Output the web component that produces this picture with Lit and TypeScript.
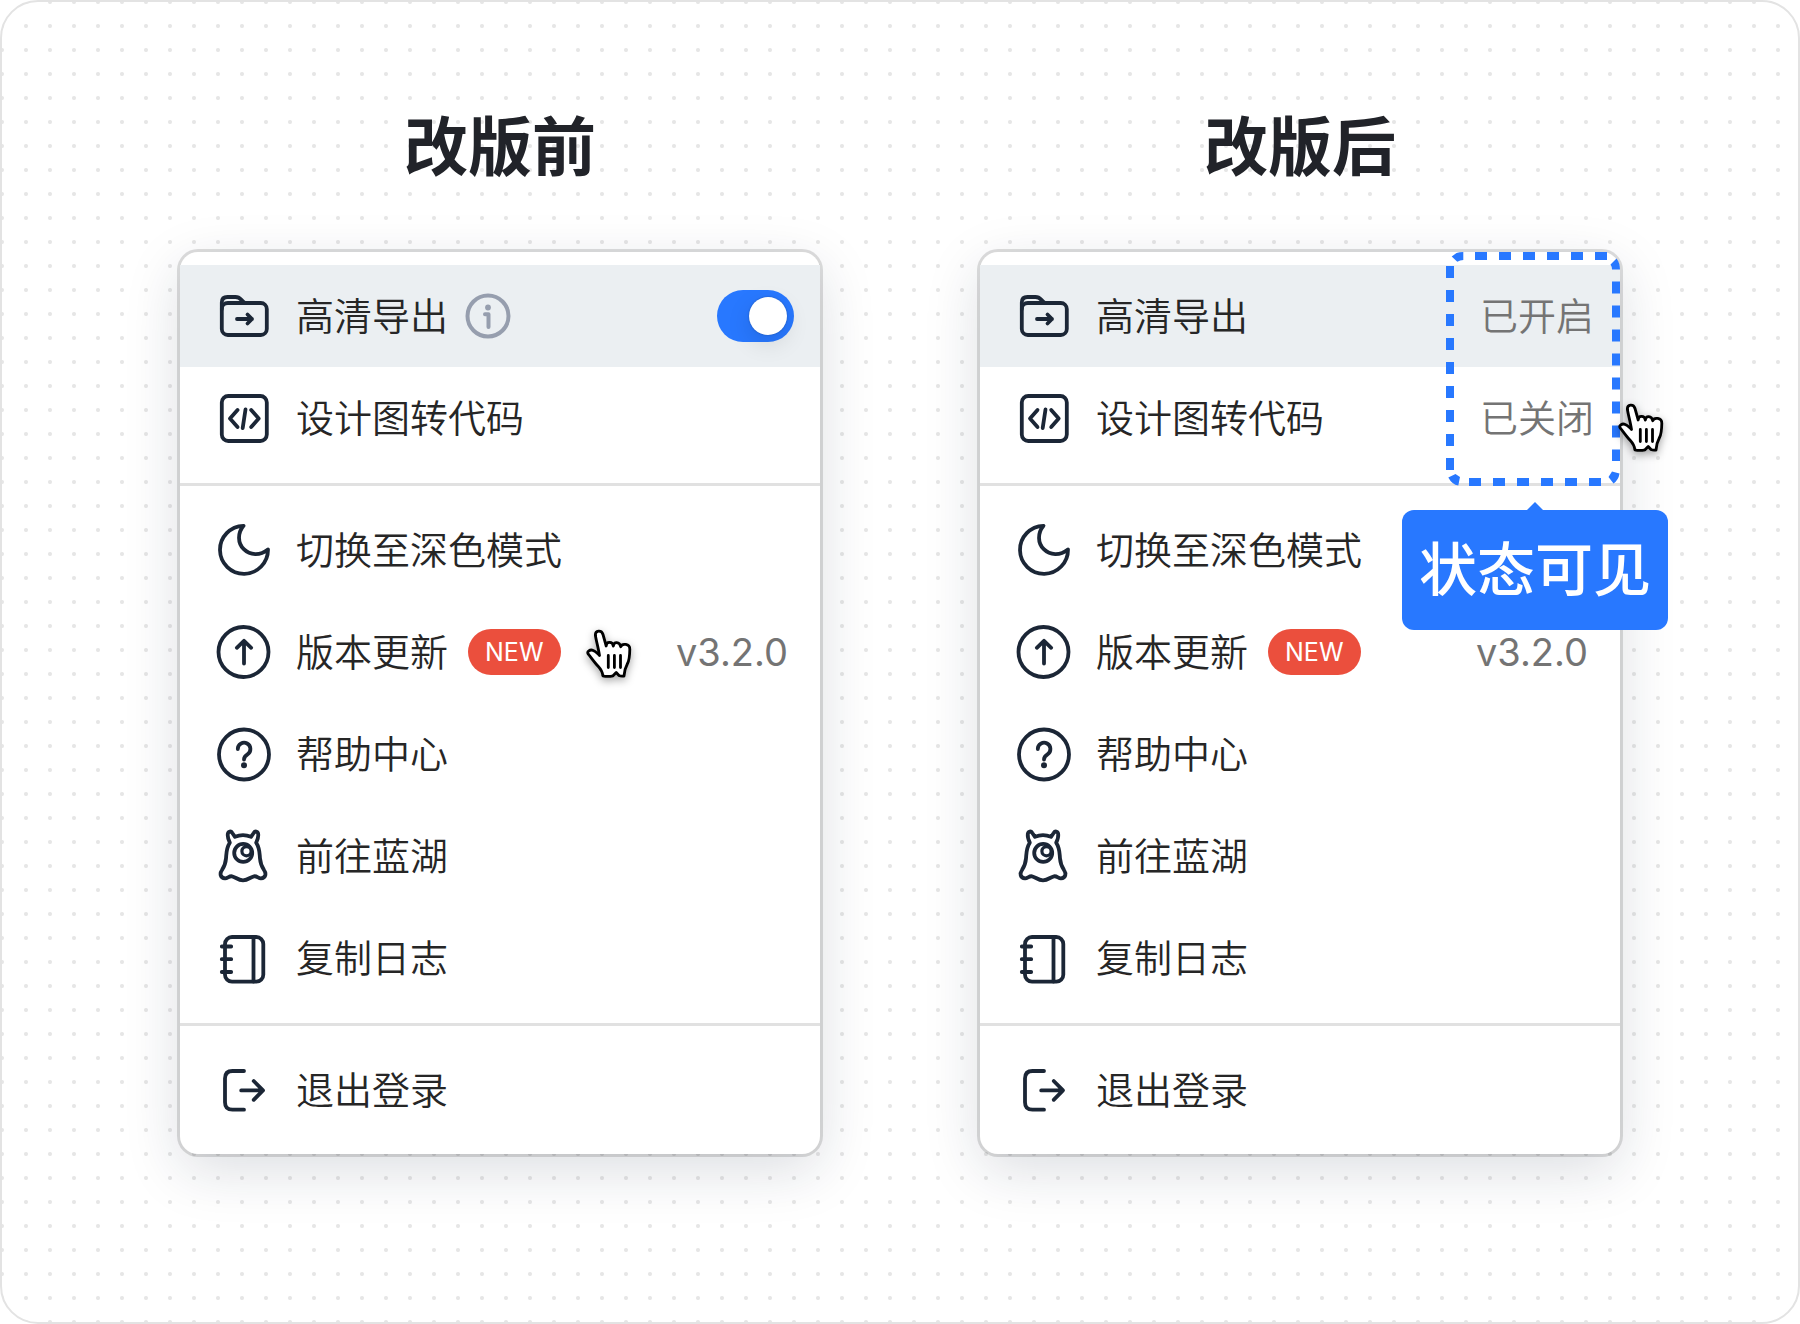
import { LitElement, html, svg, css, nothing, type TemplateResult } from "lit";
import { customElement, property } from "lit/decorators.js";

type IconName =
  | "folder" | "code" | "moon" | "update" | "help" | "monster" | "log" | "logout";

interface MenuItem {
  icon: IconName;
  label: string;
  badge?: string;
  version?: string;
  status?: string;
  toggle?: boolean;
  active?: boolean;
}

const ICONS: Record<IconName, TemplateResult> = {
  folder: svg`
    <rect x="5.8" y="15" width="45" height="32" rx="6"/>
    <path d="M5.8 21V14.5Q5.8 9 11.500 9H19.500C24.500 9 24.500 12 29 15"/>
    <path d="M21 31H36M31.500 26.500L36 31L31.500 35.500"/>`,
  code: svg`
    <rect x="5.800" y="6" width="45" height="45" rx="6.500"/>
    <path d="M21.500 20L14 28.500L21.500 37M29.500 19.500L26.700 38M35.200 20L42.700 28.500L35.200 37"/>`,
  moon: svg`
    <path d="M27.500 3.800A24 24 0 1 0 52 27.500C44 34 34 33.500 27.800 27.200C21.500 21 21.500 11 27.500 3.800Z"/>`,
  update: svg`
    <circle cx="27.500" cy="28" r="25"/>
    <path d="M28 39.500V17M20.800 23.800L28 16.800L35.200 23.800"/>`,
  help: svg`
    <circle cx="28" cy="28.500" r="25"/>
    <path d="M21.800 23A6.300 6.300 0 1 1 31.500 28.300Q28 30.500 28 33.500"/>
    <circle class="solid" cx="28" cy="39.300" r="3"/>`,
  monster: svg`
    <path d="M13.800 14.700C12 11 11.500 8.500 11.800 6C12.200 3 15 2.800 16.300 5L19 8.800Q27 5.500 35 8.800L37.700 5C39 2.800 41.800 3 42.200 6C42.500 8.500 42 11 40.200 14.700C44 20.500 43.500 25.500 44 30.500C44.500 36.500 46 39 48 42C50.500 45.500 49.800 50 45 50.300C42.500 50.500 41 47.800 38 48.300C34.500 49 32 52.300 27 52.300C22 52.300 19.500 49 16 48.300C13 47.800 11.500 50.500 9 50.300C4.200 50 3.500 45.500 6 42C8 39 9.500 36.500 10 30.500C10.500 25.500 10 20.500 13.800 14.700Z"/>
    <circle cx="27.200" cy="24.900" r="9"/>
    <circle class="pupil" cx="30.500" cy="23.200" r="4.600"/>`,
  log: svg`
    <rect x="9" y="7" width="38.300" height="44.700" rx="7"/>
    <path d="M37.500 7V51.500M5.800 16.500H15.200M5.800 29.200H15.200M5.800 42H15.200"/>`,
  logout: svg`
    <path d="M28 9H16.500Q9 9 9 16.500V40.200Q9 47.700 16.500 47.700H28"/>
    <path d="M25.200 28.400H46.500M37.700 19L47 28.400L37.700 37.800"/>`,
};

const hand = html`
  <svg class="hand" viewBox="0 0 46 50" aria-hidden="true">
    <path d="M13 23.500C12 18 10 10.500 9.400 6.500C9 1 15.500 .5 17 5.500L20.200 17C20.200 12.500 26.500 12 27.300 17C27.800 12.500 33.700 12.500 34.700 17.800C36 14 44 14.500 43.800 20.500C43.700 26 43.500 31 41.500 34.500C39 39 38.500 42 38 47Q35 47.500 33 46.500L30.200 43.500L27 46.800Q22 48 16.800 46.800C16.500 41 13.500 39 10.500 35.500C7.500 32 5.500 29 2.300 25.200C.5 22.500 4 20.300 7 21.300C9.500 22 11 24 13.500 26.500Z"/>
    <path d="M22.300 26.500V38.500M28.400 26.500V38.500M34.500 26.500V38.500"/>
  </svg>`;

@customElement("menu-icon")
export class MenuIcon extends LitElement {
  @property() name: IconName = "folder";

  static styles = css`
    :host { display: block; flex: none; width: 56px; height: 56px; }
    svg {
      display: block; width: 56px; height: 56px; fill: none;
      stroke: #1b2636; stroke-width: 3.8;
      stroke-linecap: round; stroke-linejoin: round;
    }
    .solid { fill: #1b2636; stroke: none; }
    .pupil { fill: #fff; stroke-width: 3.2; }
  `;

  render() {
    return html`<svg viewBox="0 0 56 56" aria-hidden="true">${ICONS[this.name]}</svg>`;
  }
}

@customElement("settings-menu")
export class SettingsMenu extends LitElement {
  @property({ attribute: false }) groups: MenuItem[][] = [];

  static styles = css`
    :host { display: block; }
    .panel {
      display: flex; flex-direction: column;
      padding: 13px 0; border-radius: 18px; background: #fff;
      box-shadow: 0 0 0 3px rgba(0, 0, 0, 0.13), 0 16px 56px rgba(20, 32, 60, 0.15);
    }
    .group { list-style: none; margin: 0; padding: 0; }
    .group + .group { margin-top: 14px; padding-top: 13px; border-top: 3px solid #e1e1e1; }
    .row {
      box-sizing: border-box; width: 100%; height: 102px;
      display: flex; align-items: center;
      padding: 0 26px 0 36px; border: 0; background: none;
      font: inherit; color: #262626; text-align: left; cursor: pointer;
    }
    .active { background: #ebeff2; }
    .label, .status { padding-bottom: 4px; }
    .label { margin-left: 24px; }
    .status, .version { margin-left: auto; color: #747474; }
    .version { margin-right: 6px; font-family: Inter, "Liberation Sans", sans-serif; font-weight: 400; }
    .badge {
      box-sizing: border-box; height: 46px; margin-left: 20px; padding: 0 17px;
      border-radius: 23px; background: #eb4f3d; color: #fff;
      font: 400 25px/46px Inter, "Liberation Sans", sans-serif;
    }
    .info { flex: none; width: 46px; height: 46px; margin-left: 17px; fill: none;
      stroke: #969eae; stroke-width: 4; stroke-linecap: round; stroke-linejoin: round; }
    .info .dot { fill: #969eae; stroke: none; }
    .switch {
      appearance: none; box-sizing: border-box; width: 77px; height: 52px;
      margin: 0 0 0 auto; padding: 7px; border-radius: 26px;
      background: #b8bec8; display: flex; cursor: pointer;
    }
    .switch::before {
      content: ""; width: 38px; height: 38px; border-radius: 50%; background: #fff;
      box-shadow: 0 0 2px rgba(0, 0, 0, 0.3), 0 8px 24px rgba(0, 0, 0, 0.12);
    }
    .switch:checked { background: #2878ff; justify-content: flex-end; }
  `;

  private row(item: MenuItem) {
    const classes = item.active ? "row active" : "row";
    const lead = html`<menu-icon name=${item.icon}></menu-icon>`;
    if (item.toggle) {
      return html`<label class=${classes}>
        ${lead}<span class="label">${item.label}</span>
        <svg class="info" viewBox="0 0 46 46" aria-hidden="true">
          <circle cx="23" cy="23" r="20.500"/>
          <circle class="dot" cx="23" cy="14.500" r="2.900"/>
          <path d="M20 21.300H23.500V34"/>
        </svg>
        <input class="switch" type="checkbox" role="switch" checked>
      </label>`;
    }
    return html`<button class=${classes} type="button">
      ${lead}<span class="label">${item.label}</span>
      ${item.badge ? html`<span class="badge">${item.badge}</span>` : nothing}
      ${item.version ? html`<span class="version">${item.version}</span>` : nothing}
      ${item.status ? html`<span class="status">${item.status}</span>` : nothing}
    </button>`;
  }

  render() {
    return html`<nav class="panel">
      ${this.groups.map((group) => html`<ul class="group">
        ${group.map((item) => html`<li>${this.row(item)}</li>`)}
      </ul>`)}
    </nav>`;
  }
}

const COMMON: MenuItem[][] = [
  [
    { icon: "moon", label: "切换至深色模式" },
    { icon: "update", label: "版本更新", badge: "NEW", version: "v3.2.0" },
    { icon: "help", label: "帮助中心" },
    { icon: "monster", label: "前往蓝湖" },
    { icon: "log", label: "复制日志" },
  ],
  [{ icon: "logout", label: "退出登录" }],
];

const BEFORE: MenuItem[][] = [
  [
    { icon: "folder", label: "高清导出", toggle: true, active: true },
    { icon: "code", label: "设计图转代码" },
  ],
  ...COMMON,
];

const AFTER: MenuItem[][] = [
  [
    { icon: "folder", label: "高清导出", status: "已开启", active: true },
    { icon: "code", label: "设计图转代码", status: "已关闭" },
  ],
  ...COMMON,
];

@customElement("app-root")
export class AppRoot extends LitElement {
  static styles = css`
    :host {
      display: block; background: #fff;
      font: 350 38px/56px "Noto Sans CJK SC", sans-serif;
    }
    .board {
      box-sizing: border-box; min-height: 100vh;
      display: grid; grid-template-columns: repeat(2, minmax(0, 1fr));
      gap: 160px; align-items: start; padding: 100px 178px;
      border: 2px solid #e3e3e3; border-radius: 38px;
      background: #fff radial-gradient(circle, #e6e6e6 1.5px, transparent 2.5px) -12px -12px / 24px 24px;
    }
    .title {
      margin: 0 0 70px; text-align: center; color: #212329;
      font-size: 64px; line-height: 80px; font-weight: 700;
    }
    .stage { position: relative; }
    .hand {
      position: absolute; width: 46px; height: 50px; overflow: visible;
      fill: #fff; stroke: #000; stroke-width: 2.8;
      stroke-linecap: round; stroke-linejoin: round;
      filter: drop-shadow(0 3px 4px rgba(0, 0, 0, 0.35));
    }
    .before .hand { left: 406px; top: 377px; }
    .after .hand { right: -44px; top: 151px; }
    .highlight {
      position: absolute; top: 0; right: 0; width: 174px; height: 234px;
      fill: none; stroke: #2878ff; stroke-width: 8;
      stroke-dasharray: 12; pointer-events: none;
    }
    .highlight .corner { fill: #2878ff; stroke: none; }
    .callout {
      position: absolute; top: 258px; right: -48px;
      padding: 16px 17px 24px; border-radius: 12px;
      background: #2878ff; color: #fff;
      font-size: 58px; line-height: 80px; font-weight: 500; white-space: nowrap;
    }
    .callout::before {
      content: ""; position: absolute; bottom: 100%; left: 50%;
      margin-left: -8px; width: 16px; height: 8px;
      background: #2878ff; clip-path: polygon(50% 0, 100% 100%, 0 100%);
    }
  `;

  render() {
    return html`<main class="board">
      <section class="before">
        <h2 class="title">改版前</h2>
        <div class="stage">
          <settings-menu .groups=${BEFORE}></settings-menu>
          ${hand}
        </div>
      </section>
      <section class="after">
        <h2 class="title">改版后</h2>
        <div class="stage">
          <settings-menu .groups=${AFTER}></settings-menu>
          <svg class="highlight" viewBox="0 0 174 234" aria-hidden="true">
            <path d="M29 4H161M170 29.500V209M155 230H23M4 218V14"/>
            <path class="corner" d="M5.700 4.500L10.500 1Q13.500 0 17.300 0V8Q14 8 11.300 9.700ZM164.500 12.500L170.500 6.500Q174 11 174 17.500H166Q166 14.500 164.500 12.500ZM2.300 225.500L9.500 222L14 225L12.300 233.500Q6 232.500 2.300 225.500ZM166 219.500L173.500 221.500Q172.500 228 167.500 231.500L162.500 225Z"/>
          </svg>
          <div class="callout" role="note">状态可见</div>
          ${hand}
        </div>
      </section>
    </main>`;
  }
}
